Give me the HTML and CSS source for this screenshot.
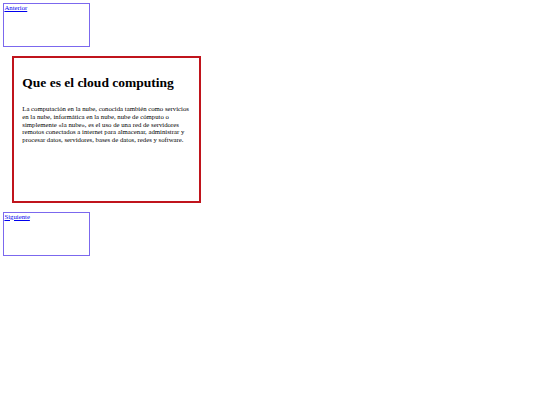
FILE: index.html
```html
<!DOCTYPE html>
<html lang="es">
<head>
<meta charset="utf-8">
<title>Cloud computing</title>
<link rel="stylesheet" href="styles.css">
</head>
<body>
<div class="nav-box"><a href="#">Anterior</a></div>
<div class="card">
<h1 class="title">Que es el cloud computing</h1>
<p class="text">La computación en la nube, conocida también como servicios en la nube, informática en la nube, nube de cómputo o simplemente «la nube», es el uso de una red de servidores remotos conectados a internet para almacenar, administrar y procesar datos, servidores, bases de datos, redes y software.</p>
</div>
<div class="nav-box"><a href="#">Siguiente</a></div>
</body>
</html>
```
FILE: styles.css
```css
body {
  margin: 3.4px;
  font-family: "Liberation Serif", "Times New Roman", serif;
  font-size: 6.75px;
  background: #fff;
}
.nav-box {
  width: 84.2px;
  height: 42px;
  border: 1.5px solid #7b68ee;
}
.nav-box a {
  color: #0000ee;
}
.card {
  width: 168.75px;
  height: 126.6px;
  margin: 8.44px;
  padding: 8.44px;
  border: 2.4px solid #c0141c;
}
.title {
  font-size: 13.5px;
  margin: 9px 0;
}
.text {
  margin: 14px 0 0;
  line-height: 7.7px;
}
```
